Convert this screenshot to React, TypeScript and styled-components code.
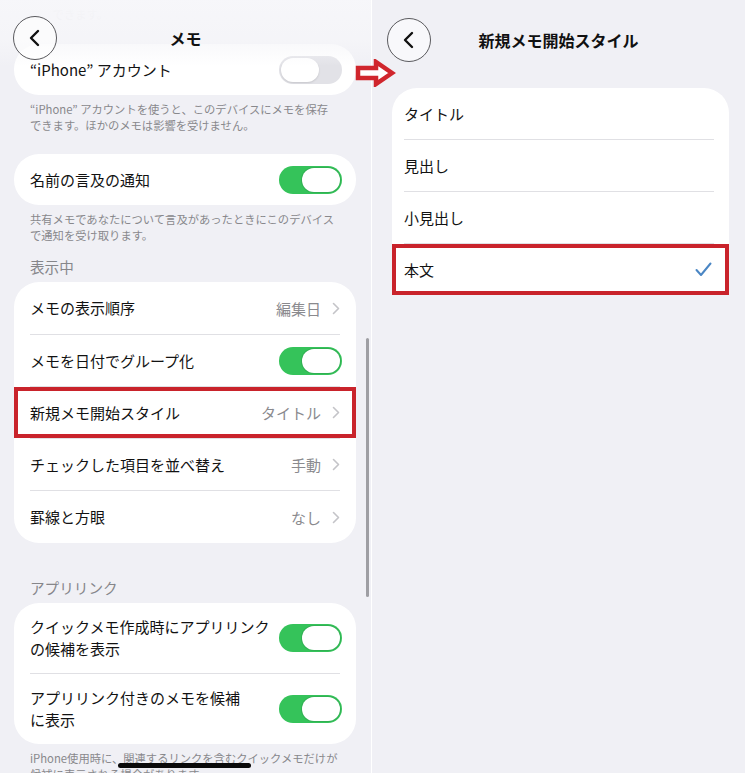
import * as React from "react";
import styled, { createGlobalStyle } from "styled-components";

const GlobalStyle = createGlobalStyle`
	body {
		margin: 0;
		background: #ffffff;
		font-family: "Noto Sans CJK JP", "Noto Sans", sans-serif;
		-webkit-font-smoothing: antialiased;
	}
`;

// Layout
const Screen = styled.div`
	position: relative;
	display: flex;
	gap: 1px;
	width: 745px;
	height: 773px;
	overflow: hidden;
	background: #ffffff;
`;

const Panel = styled.div<{ $width: number }>`
	position: relative;
	flex: 0 0 ${(p) => p.$width}px;
	height: 773px;
	overflow: hidden;
	background: #f0f0f5;
`;

const Content = styled.div<{ $pad: string }>`
	display: flex;
	flex-direction: column;
	padding: ${(p) => p.$pad};
`;

const NavBar = styled.div<{ $top: number; $side: number; $fade?: boolean }>`
	position: absolute;
	top: 0;
	left: 0;
	right: 0;
	height: 66px;
	display: grid;
	grid-template-columns: 44px 1fr 44px;
	align-items: start;
	padding: ${(p) => `${p.$top}px ${p.$side}px 0`};
	box-sizing: border-box;
	background: ${(p) =>
		p.$fade
			? "linear-gradient(180deg, rgba(247,247,250,0.97) 0%, rgba(246,246,249,0.8) 62%, rgba(246,246,249,0) 100%)"
			: "transparent"};
`;

const BackButton = styled.div`
	width: 44px;
	height: 44px;
	border-radius: 50%;
	border: 1px solid #5a5a5e;
	box-sizing: border-box;
	background: rgba(255, 255, 255, 0.55);
	display: flex;
	align-items: center;
	justify-content: center;
`;

const Title = styled.div`
	height: 44px;
	line-height: 44px;
	text-align: center;
	font-size: 16px;
	font-weight: 700;
	color: #111;
`;

const Card = styled.div<{ $mt?: number }>`
	background: #ffffff;
	border-radius: 25px;
	margin-top: ${(p) => p.$mt ?? 0}px;
`;

const Row = styled.div<{ $h?: number; $highlight?: boolean; $pl?: number; $pr?: number }>`
	display: flex;
	align-items: center;
	justify-content: space-between;
	min-height: ${(p) => p.$h ?? 51}px;
	padding: 0 ${(p) => p.$pr ?? 14}px 0 ${(p) => p.$pl ?? 16}px;
	box-sizing: border-box;
	${(p) =>
		p.$highlight &&
		`
		background: #ffffff;
		outline: 4px solid #c9232b;
		outline-offset: -4px;
	`}
`;

const Divider = styled.div<{ $l?: number; $r?: number }>`
	height: 1px;
	margin: 0 ${(p) => p.$r ?? 16}px 0 ${(p) => p.$l ?? 16}px;
	background: #e0e0e4;
`;

const Label = styled.div`
	font-size: 15px;
	line-height: 22px;
	color: #121212;
	white-space: nowrap;
`;

const Value = styled.div`
	display: flex;
	align-items: center;
	gap: 11px;
	font-size: 15px;
	color: #8a8a8e;
	padding-right: 2px;
`;

const Footer = styled.div<{ $faded?: boolean }>`
	padding: 6px 16px 0;
	font-size: 11.3px;
	line-height: 16px;
	color: #88888c;
	white-space: nowrap;
	opacity: ${(p) => (p.$faded ? 0.3 : 1)};
`;

const SectionHeader = styled.div<{ $mt: number }>`
	margin: ${(p) => p.$mt}px 0 6px;
	padding: 0 16px;
	font-size: 14.6px;
	line-height: 18px;
	color: #86868a;
`;

const Track = styled.div<{ $on: boolean }>`
	flex: 0 0 auto;
	width: 63px;
	height: 28px;
	border-radius: 14px;
	padding: 2px;
	box-sizing: border-box;
	display: flex;
	justify-content: ${(p) => (p.$on ? "flex-end" : "flex-start")};
	background: ${(p) => (p.$on ? "#35c35a" : "#e2e2e7")};
`;

const Knob = styled.div<{ $on: boolean }>`
	width: 38px;
	height: 24px;
	border-radius: 12px;
	background: #ffffff;
	box-shadow: ${(p) =>
		p.$on
			? "0 0 0 1px rgba(40,140,70,0.35)"
			: "0 1px 2px rgba(0,0,0,0.12)"};
`;

const ScrollBar = styled.div`
	position: absolute;
	left: 366px;
	top: 338px;
	width: 3px;
	height: 259px;
	border-radius: 2px;
	background: #9e9ea3;
`;

const HomeIndicator = styled.div`
	position: absolute;
	left: 118px;
	top: 763px;
	width: 133px;
	height: 5px;
	border-radius: 3px;
	background: #0a0a0a;
`;

const ArrowMark = styled.svg`
	position: absolute;
	left: 355px;
	top: 59px;
`;

// Parts
const Toggle = ({ on }: { on: boolean }) => (
	<Track $on={on}>
		<Knob $on={on} />
	</Track>
);

const BackChevron = () => (
	<svg width="24" height="24" viewBox="0 0 24 24">
		<path
			d="M15 5 L8 12 L15 19"
			fill="none"
			stroke="#111"
			strokeWidth="2.4"
			strokeLinecap="round"
			strokeLinejoin="round"
		/>
	</svg>
);

const Chevron = () => (
	<svg width="8" height="13" viewBox="0 0 8 13">
		<path
			d="M1.5 1.5 L6.5 6.5 L1.5 11.5"
			fill="none"
			stroke="#c4c4c8"
			strokeWidth="1.6"
			strokeLinecap="round"
			strokeLinejoin="round"
		/>
	</svg>
);

const Check = () => (
	<svg width="17" height="15" viewBox="0 0 17 15">
		<path
			d="M1.5 8 L6 13 L15.5 1.5"
			fill="none"
			stroke="#4a86c4"
			strokeWidth="2"
			strokeLinecap="round"
			strokeLinejoin="round"
		/>
	</svg>
);

const styles = ["タイトル", "見出し", "小見出し", "本文"];

export default function App() {
	return (
		<Screen>
			<GlobalStyle />
			<Panel $width={371}>
				<Content $pad="0 15px 0 14px">
					<Footer $faded>　　できます。</Footer>
					<Card $mt={22}>
						<Row>
							<Label>“iPhone” アカウント</Label>
							<Toggle on={false} />
						</Row>
					</Card>
					<Footer>
						“iPhone” アカウントを使うと、このデバイスにメモを保存
						<br />
						できます。ほかのメモは影響を受けません。
					</Footer>
					<Card $mt={21}>
						<Row>
							<Label>名前の言及の通知</Label>
							<Toggle on />
						</Row>
					</Card>
					<Footer>
						共有メモであなたについて言及があったときにこのデバイス
						<br />
						で通知を受け取ります。
					</Footer>
					<SectionHeader $mt={15}>表示中</SectionHeader>
					<Card>
						<Row $h={52}>
							<Label>メモの表示順序</Label>
							<Value>
								編集日
								<Chevron />
							</Value>
						</Row>
						<Divider />
						<Row>
							<Label>メモを日付でグループ化</Label>
							<Toggle on />
						</Row>
						<Divider />
						<Row $highlight>
							<Label>新規メモ開始スタイル</Label>
							<Value>
								タイトル
								<Chevron />
							</Value>
						</Row>
						<Divider />
						<Row>
							<Label>チェックした項目を並べ替え</Label>
							<Value>
								手動
								<Chevron />
							</Value>
						</Row>
						<Divider />
						<Row $h={52}>
							<Label>罫線と方眼</Label>
							<Value>
								なし
								<Chevron />
							</Value>
						</Row>
					</Card>
					<SectionHeader $mt={36}>アプリリンク</SectionHeader>
					<Card>
						<Row $h={70}>
							<Label>
								クイックメモ作成時にアプリリンク
								<br />
								の候補を表示
							</Label>
							<Toggle on />
						</Row>
						<Divider />
						<Row $h={70}>
							<Label>
								アプリリンク付きのメモを候補
								<br />
								に表示
							</Label>
							<Toggle on />
						</Row>
					</Card>
					<Footer>
						iPhone使用時に、関連するリンクを含むクイックメモだけが
						<br />
						候補に表示される場合があります。
					</Footer>
				</Content>
				<NavBar $top={16} $side={13} $fade>
					<BackButton>
						<BackChevron />
					</BackButton>
					<Title>メモ</Title>
				</NavBar>
				<ScrollBar />
				<HomeIndicator />
			</Panel>

			<Panel $width={373}>
				<Content $pad="88px 16px 0 20px">
					<Card>
						{styles.map((s, i) => (
							<React.Fragment key={s}>
								{i > 0 && <Divider $l={12} $r={15} />}
								<Row $pl={12} $pr={17} $highlight={s === "本文"}>
									<Label>{s}</Label>
									{s === "本文" && <Check />}
								</Row>
							</React.Fragment>
						))}
					</Card>
				</Content>
				<NavBar $top={18} $side={15}>
					<BackButton>
						<BackChevron />
					</BackButton>
					<Title>新規メモ開始スタイル</Title>
				</NavBar>
			</Panel>

			<ArrowMark width="42" height="28" viewBox="0 0 42 28">
				<path
					d="M3 9 L21 9 L21 3 L37 14 L21 25 L21 19 L3 19 Z"
					fill="#ffffff"
					stroke="#d0262d"
					strokeWidth="4.5"
					strokeLinejoin="miter"
				/>
			</ArrowMark>
		</Screen>
	);
}
